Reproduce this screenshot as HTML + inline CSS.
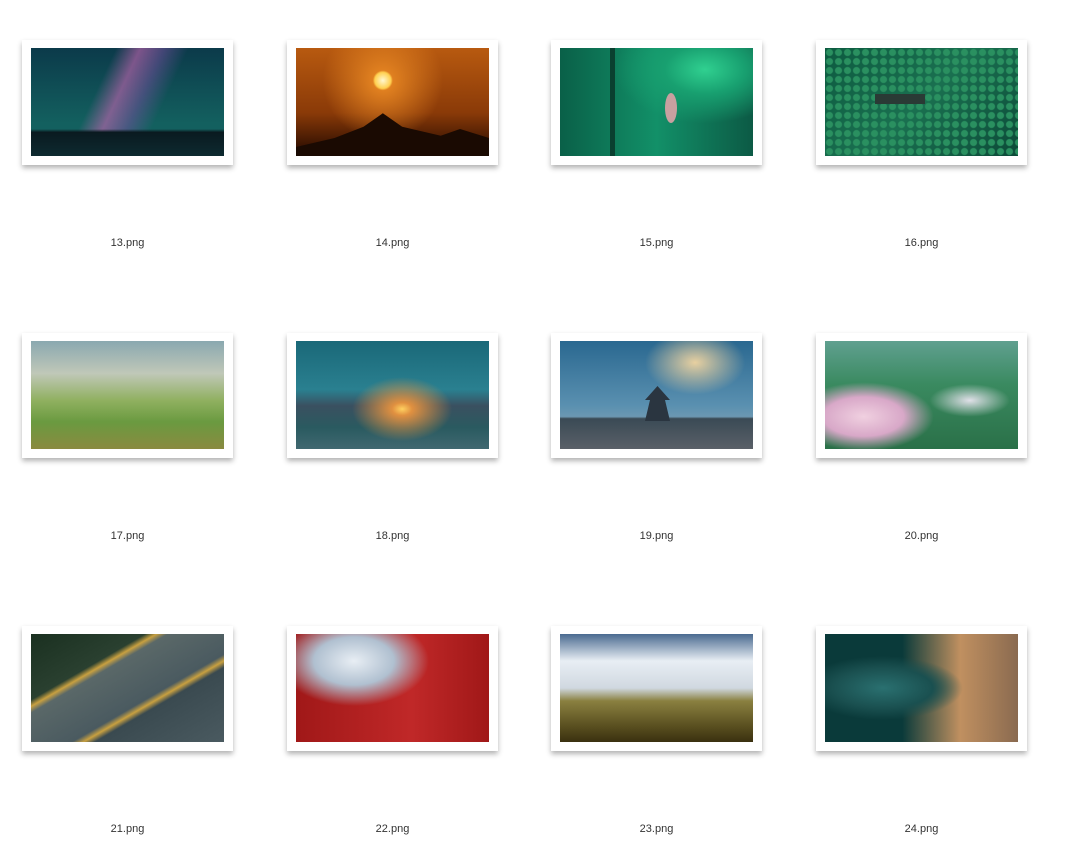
<!DOCTYPE html>
<html><head><style>
html,body{margin:0;padding:0;background:#fff;width:1080px;height:856px;overflow:hidden}
.c{position:absolute;width:211px;height:125px;background:#fff;box-shadow:0 3px 5px rgba(0,0,0,.3)}
.i{position:absolute;left:9px;top:8px;width:193px;height:108px;overflow:hidden}
.l{position:absolute;width:211px;text-align:center;font:11px "Liberation Sans",sans-serif;color:#333}
</style></head><body>
<div class="c" style="left:22px;top:40px"><div class="i" style="background:linear-gradient(180deg,transparent 75%,#0a1a20 78%,#0d2a30 100%),linear-gradient(115deg,transparent 35%,rgba(200,100,180,.6) 45%,rgba(120,80,160,.5) 55%,transparent 65%),linear-gradient(180deg,#0b3a4a,#13605f 70%)"></div></div>
<div class="l" style="left:22px;top:237px">13.png</div>
<div class="c" style="left:287px;top:40px"><div class="i" style="background:radial-gradient(circle at 45% 30%,#fff8d0 0,#ffd050 8px,#e08020 10px,transparent 60px),linear-gradient(180deg,#b85a10,#8a3a08 60%,#200800 100%)"><div style="position:absolute;left:0;bottom:0;width:193px;height:45px;background:#1a0a02;clip-path:polygon(0 100%,0 80%,20% 60%,35% 35%,45% 5%,55% 35%,75% 55%,85% 40%,100% 60%,100% 100%)"></div></div></div>
<div class="l" style="left:287px;top:237px">14.png</div>
<div class="c" style="left:551px;top:40px"><div class="i" style="background:radial-gradient(ellipse at 75% 20%,#30d090 0,#18a070 40px,transparent 90px),linear-gradient(90deg,#0a6048,#129068 50%,#0c5a45)"><div style="position:absolute;left:50px;top:0;width:5px;height:108px;background:#0a4030"></div><div style="position:absolute;left:105px;top:45px;width:12px;height:30px;border-radius:50%;background:#c8a0a0"></div></div></div>
<div class="l" style="left:551px;top:237px">15.png</div>
<div class="c" style="left:816px;top:40px"><div class="i" style="background:radial-gradient(circle,#2a9060 3px,transparent 4px) 0 0/9px 9px,linear-gradient(135deg,#0d5a40,#1a7050,#0c4a38)"><div style="position:absolute;left:50px;top:46px;width:50px;height:10px;background:#2a3a35"></div></div></div>
<div class="l" style="left:816px;top:237px">16.png</div>
<div class="c" style="left:22px;top:333px"><div class="i" style="background:linear-gradient(180deg,#8aa8b0,#c0c8b8 30%,#90b060 55%,#6a9a40 75%,#8a8a40 100%)"></div></div>
<div class="l" style="left:22px;top:530px">17.png</div>
<div class="c" style="left:287px;top:333px"><div class="i" style="background:radial-gradient(ellipse at 55% 63%,#ffd060 0,#e09040 10px,transparent 50px),linear-gradient(180deg,#1a6878,#2a8090 45%,#3a5060 60%,#2a5a60 80%,#406870)"></div></div>
<div class="l" style="left:287px;top:530px">18.png</div>
<div class="c" style="left:551px;top:333px"><div class="i" style="background:linear-gradient(180deg,transparent 70%,#3a4a55 72%,#5a6068 100%),radial-gradient(ellipse at 70% 20%,#e8d0a0 0,transparent 50px),linear-gradient(180deg,#2a6890,#5a90b0 60%,#a0b0b8)"><div style="position:absolute;left:85px;top:45px;width:25px;height:35px;background:#2a3540;clip-path:polygon(50% 0,100% 40%,80% 40%,100% 100%,0 100%,20% 40%,0 40%)"></div></div></div>
<div class="l" style="left:551px;top:530px">19.png</div>
<div class="c" style="left:816px;top:333px"><div class="i" style="background:radial-gradient(ellipse at 20% 70%,#f0d0e0 0,#d8a8c8 40px,transparent 70px),radial-gradient(ellipse at 75% 55%,#e0e0e8 0,transparent 40px),linear-gradient(180deg,#60a090,#3a8a60 40%,#2a7048)"></div></div>
<div class="l" style="left:816px;top:530px">20.png</div>
<div class="c" style="left:22px;top:626px"><div class="i" style="background:linear-gradient(150deg,#1a3020 0,#2a4030 30%,#c8a040 33%,#5a6868 36%,#4a5a60 60%,#c8a040 63%,#3a4a50 66%,#4a5a60)"></div></div>
<div class="l" style="left:22px;top:823px">21.png</div>
<div class="c" style="left:287px;top:626px"><div class="i" style="background:radial-gradient(ellipse at 30% 25%,#e8eef4 0,#b0c0d0 40px,transparent 75px),linear-gradient(90deg,#a01818,#c02828 60%,#a01818)"></div></div>
<div class="l" style="left:287px;top:823px">22.png</div>
<div class="c" style="left:551px;top:626px"><div class="i" style="background:linear-gradient(180deg,#4a6a90 0,#e8eef4 25%,#d0d8e0 50%,#8a8040 62%,#5a5020 85%,#3a3010)"></div></div>
<div class="l" style="left:551px;top:823px">23.png</div>
<div class="c" style="left:816px;top:626px"><div class="i" style="background:radial-gradient(ellipse at 30% 50%,#2a7070 0,#1a5050 50px,transparent 80px),linear-gradient(90deg,#0a3a3a 40%,#c09060 70%,#8a6a50)"></div></div>
<div class="l" style="left:816px;top:823px">24.png</div>
</body></html>
